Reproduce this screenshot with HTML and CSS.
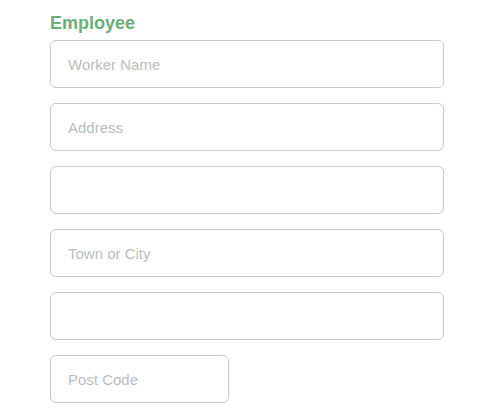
FILE: index.html
```html
<!DOCTYPE html>
<html>
<head>
<meta charset="utf-8">
<link rel="stylesheet" href="styles.css">
</head>
<body>
<form class="form">
  <h2 class="section-title">Employee</h2>
  <div class="fields">
    <input class="field" type="text" placeholder="Worker Name">
    <input class="field" type="text" placeholder="Address">
    <input class="field" type="text">
    <input class="field" type="text" placeholder="Town or City">
    <input class="field" type="text">
    <input class="field field-short" type="text" placeholder="Post Code">
  </div>
</form>
</body>
</html>
```

FILE: styles.css
```css
html, body {
  margin: 0;
  padding: 0;
  background: #ffffff;
}
body {
  font-family: "Liberation Sans", Arial, Helvetica, sans-serif;
}
.form {
  padding: 12px 0 0 50px;
  width: 394px;
}
.section-title {
  margin: 0 0 6px 0;
  font-size: 18px;
  line-height: 22px;
  font-weight: bold;
  color: #6aae7a;
}
.fields {
  display: flex;
  flex-direction: column;
  gap: 15px;
  align-items: flex-start;
}
.field {
  box-sizing: border-box;
  width: 394px;
  height: 48px;
  margin: 0;
  padding: 0 17px;
  border: 1px solid #c9c9c9;
  border-radius: 6px;
  background: #fff;
  font-family: "Liberation Sans", Arial, Helvetica, sans-serif;
  font-size: 15px;
  color: #333;
  outline: none;
}
.field::placeholder {
  color: #bdbdbd;
}
.field-short {
  width: 179px;
}
```
